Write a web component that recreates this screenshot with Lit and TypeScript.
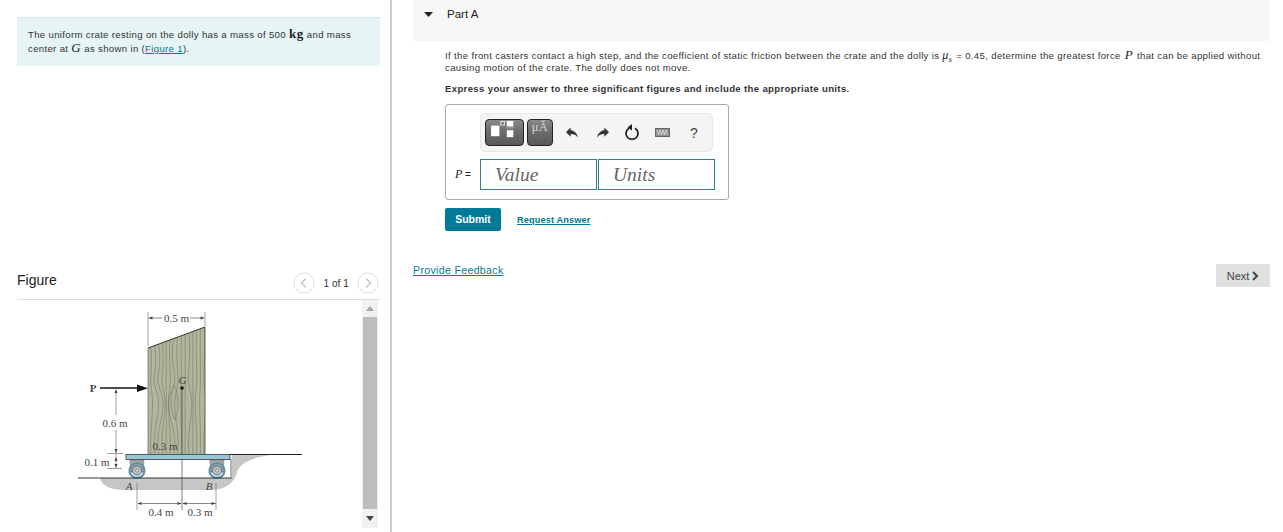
import { LitElement, html, css, svg } from "lit";
import { customElement } from "lit/decorators.js";

const grain = () => {
  const out = [];
  for (let i = 0; i < 15; i++) {
    const x = 151 + i * 3.8;
    const top = 347.5 - (x - 148) * 0.37 + 1;
    const amp = 3 * Math.sin(i * 0.9) + (i > 5 && i < 10 ? -3 : 1.5);
    const d = `M${x.toFixed(1)} ${top.toFixed(1)} C${(x + amp).toFixed(1)} ${(top + 28).toFixed(1)} ${(x - amp * 1.2).toFixed(1)} 375 ${(x + amp * 0.5).toFixed(1)} 392 S${(x - amp).toFixed(1)} 430 ${x.toFixed(1)} 454`;
    out.push(svg`<path d=${d} fill="none" stroke="#6a705e" stroke-width=".5"/>`);
  }
  out.push(svg`<path d="M174 385C170 395 170 410 175 420 179 410 179 395 174 385Z" fill="none" stroke="#6a705e" stroke-width=".5"/>`);
  return out;
};

const wheel = (cx: number) => svg`
  <path d=${`M${cx - 7} 460 L${cx + 7} 460 L${cx + 6} 472 L${cx - 6} 472 Z`} fill="#a9a9a6" stroke="#666" stroke-width=".5"/>
  <circle cx=${cx} cy="470.5" r="7.4" fill="none" stroke="#5f93a8" stroke-width="2.4"/>
  <circle cx=${cx} cy="470.5" r="4.6" fill="#c4c4bf" stroke="#3f6f83" stroke-width="1"/>
  <circle cx=${cx} cy="470.5" r="1.6" fill="#e8e8e8" stroke="#555" stroke-width=".6"/>`;

@customElement("app-root")
export class AppRoot extends LitElement {
  static styles = css`
    :host {
      display: flex;
      height: 532px;
      overflow: hidden;
      background: #fff;
      font-family: "Liberation Sans", Arial, sans-serif;
      color: #333;
    }
    a { color: #007a96; text-decoration: underline; }
    .math { font-family: "Liberation Serif", serif; color: #222; }
    .math.big { font-size: 13px; line-height: 10px; }
    .math.mu { font-size: 12px; margin-right: 1px; }
    .math.p { margin: 0 1px; }
    .left {
      box-sizing: border-box;
      width: 392px;
      flex: none;
      border-right: 2px solid #c6d0d8;
      padding: 17px 10px 0 17px;
      display: flex;
      flex-direction: column;
    }
    .info {
      box-sizing: border-box;
      height: 49px;
      flex: none;
      background: #e6f4f6;
      border-top: 1px solid #d8e6e8;
      padding: 10px 11px;
      font-size: 9.6px;
      line-height: 14px;
      letter-spacing: .33px;
    }
    .info-line { white-space: nowrap; height: 14px; }
    .info .math.big { letter-spacing: .6px; }
    .fig-head {
      box-sizing: border-box;
      flex: none;
      margin-top: 203px;
      height: 31px;
      border-bottom: 1px solid #ddd;
      display: flex;
      align-items: flex-start;
      padding-top: 3px;
    }
    .fig-title { font-size: 14px; line-height: 18px; color: #222; flex: 1; margin-top: -1px; }
    .pager {
      display: flex;
      align-items: center;
      gap: 8px;
      font-size: 10px;
      letter-spacing: .1px;
      margin-right: 1px;
    }
    .pager svg { display: block; }
    .fig-body { flex: 1; min-height: 0; display: flex; }
    .fig-canvas { flex: 1; padding-left: 43px; }
    .fig-canvas svg { display: block; }
    .scroll {
      width: 16px;
      background: #f1f1f1;
      display: flex;
      flex-direction: column;
      align-items: center;
      margin: 0 2px 4px 0;
    }
    .thumb { flex: 1; width: 14px; background: #bdbdbd; }
    .sb-btn { height: 17px; display: flex; align-items: center; justify-content: center; flex: none; }
    .sb-btn.down { height: 19px; }
    .right {
      flex: 1;
      min-width: 0;
      box-sizing: border-box;
      padding: 0 13px 0 21px;
    }
    .part-head {
      height: 41px;
      background: #f7f7f7;
      display: flex;
      align-items: flex-start;
      padding: 8px 0 0 11px;
      box-sizing: border-box;
      font-size: 11.5px;
      line-height: 13px;
      color: #222;
      gap: 14px;
    }
    .caret { margin-top: 4px; display: block; }
    .body { padding: 8px 0 0 32px; }
    .q {
      margin: 0;
      font-size: 9.6px;
      line-height: 12px;
      letter-spacing: .34px;
      white-space: nowrap;
    }
    .q sub { font-size: 8px; line-height: 0; font-style: italic; }
    .instr {
      margin: 9px 0 0;
      font-size: 9.6px;
      line-height: 12px;
      font-weight: bold;
      letter-spacing: .34px;
    }
    .answer {
      box-sizing: border-box;
      width: 284px;
      height: 96px;
      margin-top: 9px;
      border: 1px solid #aaa;
      border-radius: 3px;
      padding: 8px 0 0 34px;
    }
    .toolbar {
      box-sizing: border-box;
      width: 233px;
      height: 39px;
      background: #f4f4f4;
      border: 1px solid #e8e8e8;
      border-radius: 5px;
      display: flex;
      align-items: center;
      padding-left: 4px;
    }
    .tb {
      box-sizing: border-box;
      height: 27px;
      border: 1px solid #222;
      border-radius: 4px;
      background: linear-gradient(#8a8a8a, #6c6c6c 45%, #5a5a5a);
      display: block;
      flex: none;
    }
    .tb.tpl { width: 39px; }
    .tb.units {
      width: 26px;
      margin-left: 3px;
      color: #d8d8d8;
      font: 12.5px/14px "Liberation Serif", serif;
      text-align: center;
      letter-spacing: .5px;
    }
    .tool { display: block; flex: none; }
    .help { font-size: 14px; color: #444; margin-left: 20px; }
    .entry { display: flex; align-items: center; margin: 7px 0 0 -25px; }
    .lbl { width: 25px; font-size: 10px; color: #222; white-space: nowrap; }
    .lbl i { font: italic 12px "Liberation Serif", serif; }
    .field {
      box-sizing: border-box;
      width: 117px;
      height: 31px;
      border: 1px solid #2a7f90;
      margin-right: 1px;
      padding: 0 14px;
      font: italic 19.5px/29px "Liberation Serif", serif;
      color: #666;
      flex: none;
    }
    .actions { display: flex; align-items: center; margin-top: 8px; gap: 16px; }
    .submit {
      width: 56px;
      height: 23px;
      background: #007a96;
      color: #fff;
      border-radius: 2px;
      font-size: 10.5px;
      font-weight: bold;
      line-height: 23px;
      text-align: center;
    }
    .req { font-size: 9.2px; font-weight: bold; letter-spacing: .13px; }
    .foot { display: flex; justify-content: space-between; align-items: flex-start; margin-top: 33px; }
    .fb { font-size: 10.6px; letter-spacing: .32px; line-height: 13px; }
    .next {
      box-sizing: border-box;
      width: 54px;
      height: 23px;
      background: #e0e0e0;
      font-size: 11px;
      color: #444;
      display: flex;
      align-items: center;
      justify-content: center;
      gap: 2px;
    }
  `;

  private chevron(left: boolean) {
    return html`<svg width="22" height="22" viewBox="0 0 22 22">
      <circle cx="11" cy="11" r="10" fill="#fff" stroke="#ddd"/>
      <path d=${left ? "M13 6.500 8.500 11l4.500 4.500" : "M9 6.500 13.500 11 9 15.500"} fill="none" stroke="#c8c8c8" stroke-width="1.600"/>
    </svg>`;
  }

  render() {
    return html`
      <section class="left">
        <div class="info">
          <div class="info-line">The uniform crate resting on the dolly has a mass of 500 <b class="math big">kg</b> and mass</div>
          <div class="info-line">center at <i class="math big">G</i> as shown in (<a href="#">Figure 1</a>).</div>
        </div>
        <div class="fig-head">
          <div class="fig-title">Figure</div>
          <div class="pager">
            ${this.chevron(true)}<span>1 of 1</span>${this.chevron(false)}
          </div>
        </div>
        <div class="fig-body">
          <div class="fig-canvas">${this.figure()}</div>
          <div class="scroll">
            <div class="sb-btn"><svg width="8" height="5"><path d="M0 5 4 0l4 5z" fill="#a8a8a8"/></svg></div>
            <div class="thumb"></div>
            <div class="sb-btn down"><svg width="8" height="5"><path d="M0 0h8L4 5z" fill="#444"/></svg></div>
          </div>
        </div>
      </section>
      <section class="right">
        <div class="part-head">
          <svg class="caret" width="9" height="5"><path d="M0 0h9L4.500 5z" fill="#222"/></svg>
          <span>Part A</span>
        </div>
        <div class="body">
          <p class="q">If the front casters contact a high step, and the coefficient of static friction between the crate and the dolly is <i class="math mu">μ<sub>s</sub></i> = 0.45, determine the greatest force <i class="math big p">P</i> that can be applied without<br>causing motion of the crate. The dolly does not move.</p>
          <p class="instr">Express your answer to three significant figures and include the appropriate units.</p>
          <div class="answer">
            <div class="toolbar">
              <svg class="tb tpl" viewBox="0 0 39 27">
                <rect x="5" y="6" width="9" height="11.500" fill="#fff"/>
                <rect x="15.500" y="1.500" width="4" height="4" fill="none" stroke="#fff" stroke-width=".8"/>
                <rect x="22" y="1" width="7" height="6" fill="#fff"/>
                <rect x="21" y="8" width="9" height="1" fill="#aaa"/>
                <rect x="22" y="11" width="7" height="7.500" fill="#fff"/>
              </svg>
              <div class="tb units">μĂ</div>
              <svg class="tool" style="margin-left:13px" width="12" height="13" viewBox="3 4 18 17"><path d="M10 9V5l-7 7 7 7v-4.100c5 0 8.500 1.600 11 5.100-1-5-4-10-11-11z" fill="#333"/></svg>
              <svg class="tool" style="margin-left:19px" width="12" height="13" viewBox="3 4 18 17"><path d="M14 9V5l7 7-7 7v-4.100c-5 0-8.500 1.600-11 5.100 1-5 4-10 11-11z" fill="#333"/></svg>
              <svg class="tool" style="margin-left:15px" width="16" height="17" viewBox="0 0 16 17"><path d="M5 4.200A6 6 0 1 0 11 4.200" fill="none" stroke="#222" stroke-width="1.800"/><path d="M8 0v6.500L3.500 3.300z" fill="#222"/></svg>
              <svg class="tool" style="margin-left:15px" width="15" height="9" viewBox="0 0 15 9"><rect x=".5" y=".5" width="14" height="8" fill="#8e8e8e" stroke="#666"/><path d="M2 2l1.500 5L5 2l1.500 5L8 2l1.500 5L11 2l1.500 5" fill="none" stroke="#eee" stroke-width=".7"/></svg>
              <span class="help">?</span>
            </div>
            <div class="entry">
              <span class="lbl"><i>P</i> =</span>
              <div class="field">Value</div>
              <div class="field">Units</div>
            </div>
          </div>
          <div class="actions">
            <div class="submit">Submit</div>
            <a class="req" href="#">Request Answer</a>
          </div>
        </div>
        <div class="foot">
          <a class="fb" href="#">Provide Feedback</a>
          <div class="next">Next <svg width="8" height="10" viewBox="0 0 8 10"><path d="M2 1l4 4-4 4" fill="none" stroke="#444" stroke-width="2"/></svg></div>
        </div>
      </section>
    `;
  }

  private figure() {
    const t = (x: number, y: number, s: string, extra = "") =>
      svg`<text x=${x} y=${y} text-anchor="middle" font-family="Liberation Serif, serif" font-size="11" fill="#444" font-style=${extra === "i" ? "italic" : "normal"} font-weight=${extra === "b" ? "bold" : "normal"}>${s}</text>`;
    const l = (a: number, b: number, c: number, d: number, col = "#777", w = 0.7) =>
      svg`<line x1=${a} y1=${b} x2=${c} y2=${d} stroke=${col} stroke-width=${w}/>`;
    const head = (x: number, y: number, dir: string) => {
      const p: Record<string, string> = {
        r: `M${x} ${y}l-4 -1.500v3z`,
        l: `M${x} ${y}l4 -1.500v3z`,
        u: `M${x} ${y}l-1.500 4h3z`,
        d: `M${x} ${y}l-1.500 -4h3z`,
      };
      return svg`<path d=${p[dir]} fill="#444"/>`;
    };
    return html`<svg width="260" height="232" viewBox="60 300 260 232">
      <defs><clipPath id="crate"><path d="M148 348 205 327V454H148Z"/></clipPath></defs>
      <path d="M100 478H232V455H236C246 455 258 455 270 455C250 458 240 464 237 472 234 484 224 490 210 490H125C110 490 102 486 100 478Z" fill="#c6c6c6"/>
      <path d="M148 348 205 327V454H148Z" fill="#b2b69d"/>
      <g clip-path="url(#crate)">${grain()}</g>
      <path d="M148 348 205 327" stroke="#333" stroke-width="1" fill="none"/>
      ${l(148, 348, 148, 454, "#555", 0.6)}${l(205, 327, 205, 454, "#444", 0.8)}
      ${l(148, 312, 148, 346)}${l(205, 312, 205, 326)}
      ${l(149, 318, 162, 318, "#555")}${l(190, 318, 204, 318, "#555")}
      ${head(148.500, 318, "l")}${head(204.500, 318, "r")}
      ${t(176.500, 322, "0.5 m")}
      ${l(100, 388, 140, 388, "#111", 1.600)}
      <path d="M148 388.200 137 384.500v7.400z" fill="#111"/>
      ${t(93, 391.500, "P", "b")}
      ${l(116, 391, 116, 415)}${l(116, 430, 116, 468)}
      ${head(116, 389, "u")}${head(116, 453, "d")}${head(116, 457, "u")}${head(116, 468, "d")}
      ${t(115, 426.500, "0.6 m")}
      ${l(107, 453.500, 123, 453.500)}${l(107, 468.500, 122, 468.500)}
      ${t(97, 465.500, "0.1 m")}
      ${t(182.500, 384, "G", "i")}
      <circle cx="182" cy="388" r="1.800" fill="#111"/>
      ${l(182, 389, 182, 510, "#444", 0.7)}
      ${t(165, 450, "0.3 m")}
      ${wheel(137)}${wheel(217)}
      <rect x="126" y="454.500" width="104" height="5" fill="#9cc6d6" stroke="#2e3b42" stroke-width=".8"/>
      ${l(230, 454.500, 302, 454.500, "#222", 1)}
      ${l(78, 478, 231.500, 478, "#333", 1)}
      ${l(231, 459, 231, 478, "#444", 0.8)}
      ${t(129, 490, "A", "i")}${t(209, 490, "B", "i")}
      ${l(137, 483, 137, 510)}${l(216, 483, 216, 510)}
      ${l(138, 503.500, 181, 503.500, "#555")}${l(183, 503.500, 216, 503.500, "#555")}
      ${head(137.500, 503.500, "l")}${head(181.500, 503.500, "r")}${head(182.500, 503.500, "l")}${head(215.500, 503.500, "r")}
      ${t(161, 516, "0.4 m")}${t(200, 516, "0.3 m")}
    </svg>`;
  }
}
